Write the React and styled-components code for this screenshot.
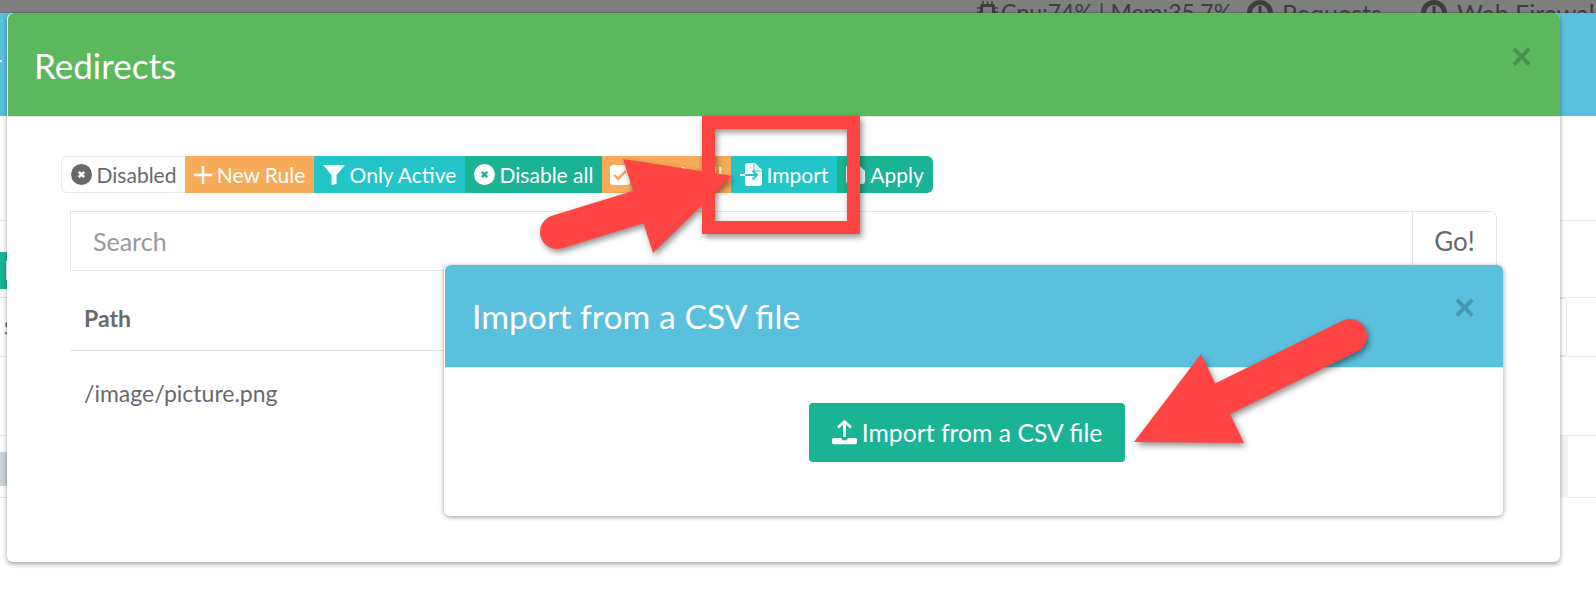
import React from "react";
import styled, { createGlobalStyle } from "styled-components";

const Global = createGlobalStyle`
  html, body { margin: 0; padding: 0; background: #fff; }
  body { width: 1596px; height: 608px; overflow: hidden; font-family: Lato, "Open Sans", "Liberation Sans", sans-serif; color: #676a6c; }
  * { box-sizing: border-box; }
`;

const Page = styled.div`
  position: relative;
  width: 1596px;
  height: 608px;
  overflow: hidden;
  background: #fff;
`;
const TopStrip = styled.div`
  height: 13px;
  background: #7f7f7f;
  overflow: hidden;
  display: flex;
  align-items: flex-start;
  padding: 0 0 0 977px;
  color: #3e3e3e;
  line-height: 24px;
  white-space: nowrap;
  box-shadow: inset 0 -1px 0 #707070;
`;
const TopItem = styled.span`
  display: inline-flex;
  align-items: center;
  gap: ${(p) => p.$gap}px;
  width: ${(p) => p.$w}px;
  flex: none;
  font-size: ${(p) => p.$fs}px;
  & > svg { flex: none; }
`;
const NavBar = styled.div`
  height: 103px;
  background: #5bc0de;
  display: flex;
  align-items: center;
`;
const NavTick = styled.span`
  width: 2px;
  height: 2px;
  background: #fff;
  margin-top: -7px;
`;
const BgHeading = styled.div`
  height: 105px;
  border-bottom: 1px solid #e7eaec;
`;
const BgToolbar = styled.div`
  height: 77px;
  padding-top: 31px;
  border-bottom: 1px solid #e7eaec;
`;
const BgTeal = styled.div`
  width: 8px;
  height: 37px;
  background: #1ab394;
  display: flex;
  align-items: center;
  justify-content: flex-end;
  & > span { width: 2px; height: 19px; background: #fff; }
`;
const BgSearchRow = styled.div`
  height: 59px;
  border-bottom: 1px solid #e7eaec;
  display: flex;
  justify-content: space-between;
  align-items: center;
  font-size: 20px;
  padding-left: 4px;
`;
const BgBox = styled.div`
  width: 36px;
  height: 58px;
  border: 1px solid #e5e6e7;
  border-left: 0;
  border-radius: 0 4px 4px 0;
  margin-right: 29px;
`;
const BgEmpty = styled.div`
  height: 79px;
  border-bottom: 1px solid #e7eaec;
`;
const BgStrip = styled.div`
  height: 62px;
  border-bottom: 1px solid #e7eaec;
  display: flex;
  justify-content: space-between;
  align-items: flex-start;
`;
const BgGrey = styled.div`
  width: 8px;
  height: 34px;
  margin-top: 16px;
  background: #c9d5d9;
`;
const BgBand = styled.div`
  width: 8px;
  height: 62px;
  background: #f5f5f5;
  margin-right: 28px;
`;

const MainModal = styled.div`
  position: absolute;
  left: 7px;
  top: 13px;
  width: 1553px;
  height: 549px;
  background: #fff;
  border-radius: 6px;
  box-shadow: 0 2px 5px rgba(0, 0, 0, 0.38);
`;
const Header = styled.div`
  position: relative;
  height: ${(p) => p.$h}px;
  background: ${(p) => p.$bg};
  margin-left: 1px;
  border-radius: 6px 6px 0 0;
  padding-left: ${(p) => p.$pad}px;
  display: flex;
  align-items: center;
  color: #fff;
  font-size: ${(p) => p.$fs}px;
  font-weight: 400;
  box-shadow: 0 1px 0 #e5e5e5;
`;
const Close = styled.span`
  position: absolute;
  right: ${(p) => p.$r}px;
  top: ${(p) => p.$t}px;
  font-family: "Liberation Sans", sans-serif;
  font-size: 36px;
  line-height: 36px;
  font-weight: 700;
  color: #000;
  opacity: 0.2;
`;
const Body = styled.div`
  padding: 40px 63px 0 54px;
`;
const Toolbar = styled.div`
  display: flex;
  height: 37px;
  margin-bottom: 18px;
`;
const ToolButton = styled.div`
  width: ${(p) => p.$w}px;
  height: 37px;
  display: flex;
  align-items: center;
  justify-content: center;
  gap: 5px;
  font-size: 21px;
  white-space: nowrap;
  background: ${(p) => p.$bg || "#fff"};
  color: ${(p) => (p.$bg ? "#fff" : "#676a6c")};
  border: ${(p) => (p.$bg ? "0" : "1px solid #e7eaec")};
  border-right: 0;
  border-radius: ${(p) => p.$radius || "0"};
`;
const SearchGroup = styled.div`
  display: flex;
  height: 60px;
  margin-left: 9px;
  font-size: 25px;
`;
const SearchInput = styled.div`
  flex: 1;
  border: 1px solid #e5e6e7;
  color: #999;
  padding-left: 22px;
  display: flex;
  align-items: center;
`;
const GoButton = styled.div`
  width: 84px;
  border: 1px solid #e5e6e7;
  border-left: 0;
  border-radius: 0 6px 6px 0;
  display: flex;
  align-items: center;
  justify-content: center;
  font-size: 26px;
`;
const Table = styled.div`
  margin-left: 9px;
  font-size: 23px;
`;
const TableHead = styled.div`
  height: 80px;
  border-bottom: 1px solid #e0e2e3;
  padding: 30px 14px 0;
  line-height: 34px;
  font-weight: 700;
`;
const TableRow = styled.div`
  padding: 25px 14px 0;
  line-height: 34px;
`;

const SubModal = styled.div`
  position: absolute;
  left: 437px;
  top: 252px;
  width: 1059px;
  height: 251px;
  background: #fff;
  border-radius: 6px;
  box-shadow: 0 1px 5px rgba(0, 0, 0, 0.4);
`;
const SubBody = styled.div`
  display: flex;
  justify-content: center;
  padding: 36px 13px 0 0;
`;
const ImportButton = styled.div`
  width: 316px;
  height: 59px;
  border-radius: 4px;
  background: #1ab394;
  color: #fff;
  font-size: 24.75px;
  display: flex;
  align-items: center;
  justify-content: center;
  gap: 5px;
`;
const Marks = styled.svg`
  position: absolute;
  left: 0;
  top: 0;
  pointer-events: none;
  filter: drop-shadow(2px 3px 3px rgba(0, 0, 0, 0.45));
`;

const XCircle = ({ color, cross }) => (
  <svg width="21" height="21" viewBox="0 0 21 21">
    <circle cx="10.5" cy="10.5" r="10.5" fill={color} />
    <path d="M7.8 7.8l5.4 5.4M13.2 7.8l-5.4 5.4" stroke={cross} strokeWidth="2.6" />
  </svg>
);
const Plus = () => (
  <svg width="18" height="18" viewBox="0 0 18 18">
    <path d="M9 0v18M0 9h18" stroke="#fff" strokeWidth="2.4" />
  </svg>
);
const Funnel = () => (
  <svg width="22" height="20" viewBox="0 0 22 20">
    <path d="M0 0h22L13.5 10v9l-5 1V10z" fill="#fff" />
  </svg>
);
const CheckBox = () => (
  <svg width="20" height="20" viewBox="0 0 20 20">
    <rect width="20" height="20" rx="3" fill="#fff" />
    <path d="M4 10l4 4 8-8" stroke="#f8ac59" strokeWidth="2.6" fill="none" />
  </svg>
);
const FileImport = () => (
  <svg width="22" height="23" viewBox="0 0 22 23">
    <path d="M5 2.500Q5 0 7.500 0H15l7 7v13.500Q22 23 19.500 23H7.500Q5 23 5 20.500z" fill="#fff" />
    <path d="M14 0.500V8h7.500" stroke="#23c6c8" strokeWidth="1" fill="none" />
    <path d="M5 12h12M12.500 7.500L17 12l-4.500 4.500" stroke="#23c6c8" strokeWidth="2" fill="none" />
    <path d="M0 12h5" stroke="#fff" strokeWidth="2" />
  </svg>
);
const ApplyIcon = () => (
  <svg width="19" height="19" viewBox="0 0 19 19">
    <path d="M3 0h10l6 6v10a3 3 0 0 1-3 3H3a3 3 0 0 1-3-3V3a3 3 0 0 1 3-3z" fill="#fff" />
  </svg>
);
const Upload = () => (
  <svg width="25" height="25" viewBox="0 0 25 25">
    <path d="M6 7.500L12.500 1.500 19 7.500" stroke="#fff" strokeWidth="2.600" fill="none" />
    <path d="M12.500 2v15" stroke="#fff" strokeWidth="3" />
    <path d="M2.500 18h6.500q1 2.500 3.500 2.500T16 18h6.500a2.900 2.900 0 0 1 0 6.200h-20a2.900 2.900 0 0 1 0-6.200z" fill="#fff" />
  </svg>
);
const Chip = () => (
  <svg width="21" height="22" viewBox="0 0 21 22">
    <rect x="3" y="3" width="15" height="16" rx="2" fill="#3e3e3e" />
    <path d="M6 0v22M10.500 0v22M15 0v22M0 7h21M0 11h21M0 15h21" stroke="#3e3e3e" strokeWidth="1.500" />
    <rect x="6" y="6" width="9" height="10" fill="#7f7f7f" />
  </svg>
);
const Clock = () => (
  <svg width="26" height="26" viewBox="0 0 26 26">
    <circle cx="13" cy="13" r="10.500" fill="none" stroke="#3e3e3e" strokeWidth="5" />
    <path d="M13 6v8h6" stroke="#3e3e3e" strokeWidth="3" fill="none" />
  </svg>
);

export default function App() {
  return (
    <Page>
      <Global />
      <TopStrip>
        <TopItem $w={270} $gap={3} $fs={23}><Chip />Cpu:74% | Mem:35.7%</TopItem>
        <TopItem $w={174} $gap={9} $fs={25}><Clock />Requests</TopItem>
        <TopItem $w={175} $gap={10} $fs={25}><Clock />Web Firewall</TopItem>
      </TopStrip>
      <NavBar><NavTick /></NavBar>
      <BgHeading />
      <BgToolbar><BgTeal><span /></BgTeal></BgToolbar>
      <BgSearchRow>S<BgBox /></BgSearchRow>
      <BgEmpty />
      <BgStrip><BgGrey /><BgBand /></BgStrip>

      <MainModal>
        <Header $h={103} $bg="#5cb85c" $pad={26} $fs={35}>
          Redirects
          <Close $r={28} $t={26}>×</Close>
        </Header>
        <Body>
          <Toolbar>
            <ToolButton $w={124} $radius="6px 0 0 6px"><XCircle color="#676a6c" cross="#fff" />Disabled</ToolButton>
            <ToolButton $w={129} $bg="#f8ac59"><Plus />New Rule</ToolButton>
            <ToolButton $w={151} $bg="#23c6c8"><Funnel />Only Active</ToolButton>
            <ToolButton $w={137} $bg="#1ab394"><XCircle color="#fff" cross="#1ab394" />Disable all</ToolButton>
            <ToolButton $w={129} $bg="#f8ac59"><CheckBox />Enable all</ToolButton>
            <ToolButton $w={106} $bg="#23c6c8"><FileImport />Import</ToolButton>
            <ToolButton $w={96} $bg="#1ab394" $radius="0 6px 6px 0"><ApplyIcon />Apply</ToolButton>
          </Toolbar>
          <SearchGroup>
            <SearchInput>Search</SearchInput>
            <GoButton>Go!</GoButton>
          </SearchGroup>
          <Table>
            <TableHead>Path</TableHead>
            <TableRow>/image/picture.png</TableRow>
          </Table>
        </Body>
        <SubModal>
          <Header $h={102} $bg="#5bc0de" $pad={27} $fs={33.75}>
            Import from a CSV file
            <Close $r={28} $t={25}>×</Close>
          </Header>
          <SubBody>
            <ImportButton><Upload />Import from a CSV file</ImportButton>
          </SubBody>
        </SubModal>
      </MainModal>

      <Marks width="1596" height="608" viewBox="0 0 1596 608">
        <path d="M702 116H860V234H702zM715 129V221H847V129z" fill="#ff4444" fillRule="evenodd" />
        <path d="M557 232L645 205" stroke="#ff4444" strokeWidth="34" strokeLinecap="round" />
        <polygon points="732,176 623,159 653,253" fill="#ff4444" />
        <path d="M1350 336L1218 401" stroke="#ff4444" strokeWidth="34" strokeLinecap="round" />
        <polygon points="1134,442 1201,354 1244,443" fill="#ff4444" />
      </Marks>
    </Page>
  );
}
